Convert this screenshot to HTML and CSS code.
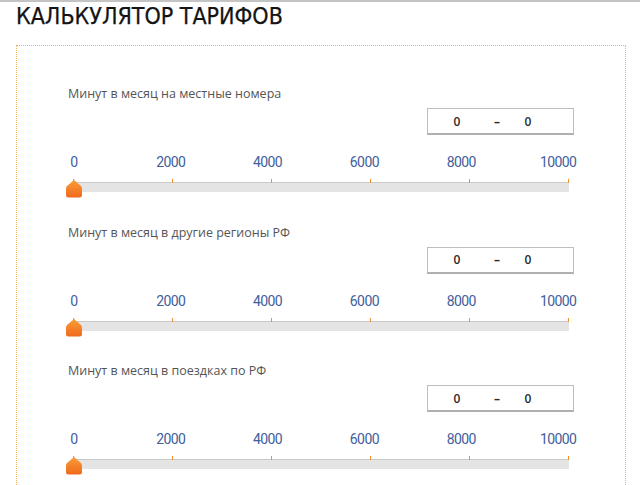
FILE: index.html
```html
<!DOCTYPE html>
<html lang="ru">
<head>
<meta charset="utf-8">
<title>Калькулятор тарифов</title>
<link rel="stylesheet" href="styles.css">
</head>
<body>
<div class="page">
  <h1 class="title">КАЛЬКУЛЯТОР ТАРИФОВ</h1>
  <div class="calc">
    <section class="row">
      <div class="label">Минут в месяц на местные номера</div>
      <div class="range-line"><div class="range"><span>0</span><span class="dash">–</span><span>0</span></div></div>
      <div class="scale"><span>0</span><span>2000</span><span>4000</span><span>6000</span><span>8000</span><span>10000</span></div>
      <div class="slider">
        <div class="ticks"><i></i><i></i><i></i><i></i><i></i><i></i></div>
        <div class="track"></div>
        <svg class="handle" width="16" height="19" viewBox="0 0 16 19"><defs><linearGradient id="g1" x1="0" y1="0" x2="0" y2="1"><stop offset="0" stop-color="#f9a03a"/><stop offset="1" stop-color="#f06a1c"/></linearGradient></defs><path d="M8 0 L8.6 1.5 L15 7 Q16 8 16 10 L16 16 Q16 18.5 13.5 18.5 L2.5 18.5 Q0 18.5 0 16 L0 10 Q0 8 1 7 L7.4 1.5 Z" fill="url(#g1)"/></svg>
      </div>
    </section>
    <section class="row">
      <div class="label">Минут в месяц в другие регионы РФ</div>
      <div class="range-line"><div class="range"><span>0</span><span class="dash">–</span><span>0</span></div></div>
      <div class="scale"><span>0</span><span>2000</span><span>4000</span><span>6000</span><span>8000</span><span>10000</span></div>
      <div class="slider">
        <div class="ticks"><i></i><i></i><i></i><i></i><i></i><i></i></div>
        <div class="track"></div>
        <svg class="handle" width="16" height="19" viewBox="0 0 16 19"><path d="M8 0 L8.6 1.5 L15 7 Q16 8 16 10 L16 16 Q16 18.5 13.5 18.5 L2.5 18.5 Q0 18.5 0 16 L0 10 Q0 8 1 7 L7.4 1.5 Z" fill="url(#g1)"/></svg>
      </div>
    </section>
    <section class="row">
      <div class="label">Минут в месяц в поездках по РФ</div>
      <div class="range-line"><div class="range"><span>0</span><span class="dash">–</span><span>0</span></div></div>
      <div class="scale"><span>0</span><span>2000</span><span>4000</span><span>6000</span><span>8000</span><span>10000</span></div>
      <div class="slider">
        <div class="ticks"><i></i><i></i><i></i><i></i><i></i><i></i></div>
        <div class="track"></div>
        <svg class="handle" width="16" height="19" viewBox="0 0 16 19"><path d="M8 0 L8.6 1.5 L15 7 Q16 8 16 10 L16 16 Q16 18.5 13.5 18.5 L2.5 18.5 Q0 18.5 0 16 L0 10 Q0 8 1 7 L7.4 1.5 Z" fill="url(#g1)"/></svg>
      </div>
    </section>
  </div>
</div>
</body>
</html>
```
FILE: styles.css
```css
html, body {
  margin: 0;
  padding: 0;
  background: #fff;
  height: 100%;
  overflow: hidden;
}
.page {
  border-top: 2px solid #c4c4c4;
  min-height: 100%;
}
.title {
  margin: 0;
  padding: 1px 0 0 16px;
  height: 43px;
  box-sizing: border-box;
  font-family: "DejaVu Sans Condensed", "DejaVu Sans", sans-serif;
  font-stretch: condensed;
  font-weight: normal;
  font-size: 23px;
  line-height: 26px;
  color: #141414;
  -webkit-text-stroke: 0.25px #141414;
}
.calc {
  margin-left: 16px;
  width: 610px;
  box-sizing: border-box;
  border: 1px dotted #f4b063;
  border-bottom: none;
  padding-top: 40px;
  height: 600px;
}
.row {
  height: 138.5px;
  padding-left: 51px;
}
.label {
  font-family: "Open Sans", "DejaVu Sans", sans-serif;
  font-size: 12.5px;
  line-height: 16px;
  color: #555;
  height: 16px;
}
.range-line {
  display: flex;
  justify-content: flex-end;
  width: 506px;
  margin-top: 6px;
}
.range {
  width: 147px;
  height: 27px;
  box-sizing: border-box;
  border: 1px solid #bdbdbd;
  border-bottom: 2px solid #b0b0b0;
  display: flex;
  align-items: center;
  padding-left: 25px;
  font-family: "Open Sans", "DejaVu Sans", sans-serif;
  font-weight: 600;
  font-size: 12px;
  color: #2a2a2a;
}
.range span {
  width: 8px;
  text-align: center;
}
.range .dash {
  width: 8px;
  margin: 0 23px 0 32px;
  font-weight: 700;
}
.scale {
  display: flex;
  justify-content: space-between;
  width: 520px;
  margin-left: -12px;
  margin-top: 19px;
  height: 16px;
  font-family: "Liberation Sans Narrow", "Roboto", sans-serif;
  font-size: 14px;
  line-height: 16px;
  letter-spacing: -0.6px;
  color: #42609c;
}
.scale span {
  width: 36px;
  text-align: center;
}
.slider {
  position: relative;
  width: 496px;
  margin-left: 5px;
  margin-top: 9px;
}
.ticks {
  display: flex;
  justify-content: space-between;
  height: 3px;
}
.ticks i {
  width: 1px;
  height: 4px;
  background: #f0912e;
}
.track {
  height: 10px;
  background: #e4e4e4;
  border-top: 1px solid #c9c9c9;
  box-sizing: border-box;
}
.handle {
  position: absolute;
  left: -7px;
  top: 0;
}
```
